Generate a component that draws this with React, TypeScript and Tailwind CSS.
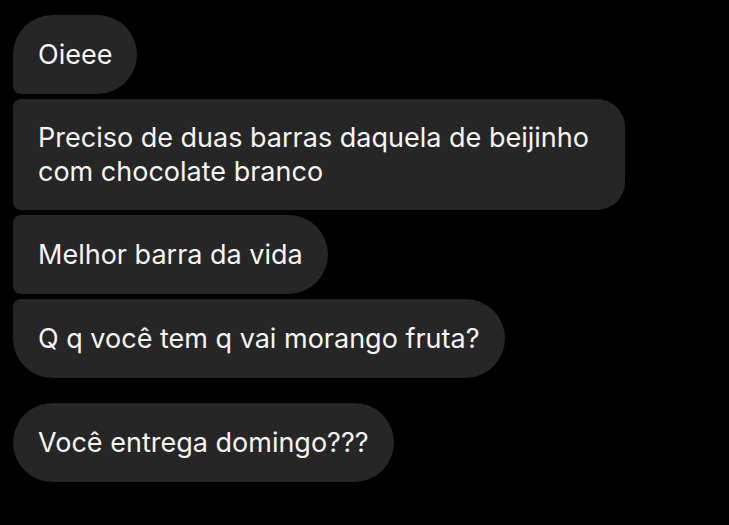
import React from 'react';

type Msg = {
  lines: string[];
  radius: string;
  wide?: boolean;
};

const group: Msg[] = [
  { lines: ['Oieee'], radius: 'rounded-tl-[40px] rounded-tr-[40px] rounded-br-[40px] rounded-bl-[8px]' },
  {
    lines: ['Preciso de duas barras daquela de beijinho', 'com chocolate branco'],
    radius: 'rounded-tl-[8px] rounded-bl-[8px] rounded-tr-[28px] rounded-br-[28px]',
    wide: true
  },
  { lines: ['Melhor barra da vida'], radius: 'rounded-tl-[8px] rounded-bl-[8px] rounded-tr-[40px] rounded-br-[40px]' },
  { lines: ['Q q você tem q vai morango fruta?'], radius: 'rounded-tl-[8px] rounded-bl-[40px] rounded-tr-[40px] rounded-br-[40px]' }
];

const Bubble = ({ msg }: { msg: Msg }): JSX.Element => (
  <div
    className={`bg-[#262626] text-[#f5f5f5] px-[25px] leading-[34px] text-[27px] whitespace-nowrap ${msg.radius} ${
      msg.wide ? 'w-[612px] py-[21.5px]' : 'w-fit py-[22.5px]'
    }`}
  >
    {msg.lines.map((l, i) => (
      <div key={i}>{l}</div>
    ))}
  </div>
);

const App = (): JSX.Element => {
  return (
    <div
      className="w-[729px] h-[525px] bg-black overflow-hidden pl-[13px] pt-[15px]"
      style={{ fontFamily: 'Inter, "Noto Sans", sans-serif' }}
    >
      <div className="flex flex-col gap-[5px]">
        {group.map((m, i) => (
          <Bubble key={i} msg={m} />
        ))}
      </div>
      <div className="mt-[25px]">
        <Bubble msg={{ lines: ['Você entrega domingo???'], radius: 'rounded-[40px]' }} />
      </div>
    </div>
  );
};

export default App;
